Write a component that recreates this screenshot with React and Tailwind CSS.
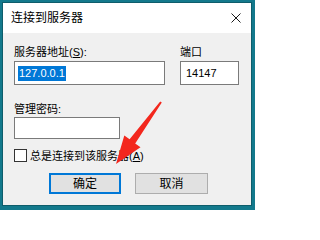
import React from "react";

export default function App() {
  return (
    <div className="relative w-[255px] h-[210px] bg-[#13798c] p-[2px] font-['Liberation_Sans','Noto_Sans_CJK_SC',sans-serif] text-[11px] text-[#000]">
      <div className="w-[250px] h-[204px] border border-[#0e5d6b] bg-[#f0f0f0] flex flex-col">
        <div className="h-[30px] bg-white flex items-center justify-between pl-[8px] pr-[10px] shrink-0">
          <span className="text-[12px] leading-[16px] text-[#000]">连接到服务器</span>
          <svg width="10" height="10" viewBox="0 0 10 10">
            <path d="M0.5 0.5 L9.5 9.5 M9.5 0.5 L0.5 9.5" stroke="#1a1a1a" strokeWidth="1" />
          </svg>
        </div>
        <div className="flex flex-col pl-[11px] pt-[11px]">
          <div className="flex gap-[15px]">
            <div className="flex flex-col w-[151px]">
              <div className="h-[16px] leading-[16px]">
                服务器地址(<span className="underline">S</span>):
              </div>
              <div className="mt-[1px] h-[24px] bg-white border border-[#7a7a7a] flex items-center pl-[3px]">
                <span className="bg-[#0078d7] text-white leading-[15px] h-[15px] px-[1px]">127.0.0.1</span>
              </div>
            </div>
            <div className="flex flex-col w-[59px]">
              <div className="h-[16px] leading-[16px]">端口</div>
              <div className="mt-[1px] h-[24px] bg-white border border-[#7a7a7a] flex items-center pl-[5px]">
                <span className="leading-[15px]">14147</span>
              </div>
            </div>
          </div>
          <div className="mt-[16px] h-[16px] leading-[16px]">管理密码:</div>
          <div className="w-[106px] h-[22px] bg-white border border-[#7a7a7a]"></div>
          <div className="mt-[10px] h-[13px] flex items-center gap-[3px]">
            <div className="w-[13px] h-[13px] border border-[#333] bg-white shrink-0"></div>
            <span className="leading-[16px]">
              总是连接到该服务器(<span className="underline">A</span>)
            </span>
          </div>
          <div className="mt-[11px] flex gap-[14px] pl-[35px]">
            <div className="w-[72px] h-[21px] border-2 border-[#0078d7] bg-[#e1e1e1] flex items-center justify-center text-[12px]">
              确定
            </div>
            <div className="w-[73px] h-[21px] border border-[#adadad] bg-[#e1e1e1] flex items-center justify-center text-[12px]">
              取消
            </div>
          </div>
        </div>
      </div>
      <svg className="absolute inset-0 pointer-events-none" width="255" height="210" viewBox="0 0 255 210">
        <polygon
          points="161.8,102.6 135.2,143.4 140.5,147.2 116,164 124.3,135.4 129.6,139.2 160.2,101.4"
          fill="#f3271d"
        />
      </svg>
    </div>
  );
}
